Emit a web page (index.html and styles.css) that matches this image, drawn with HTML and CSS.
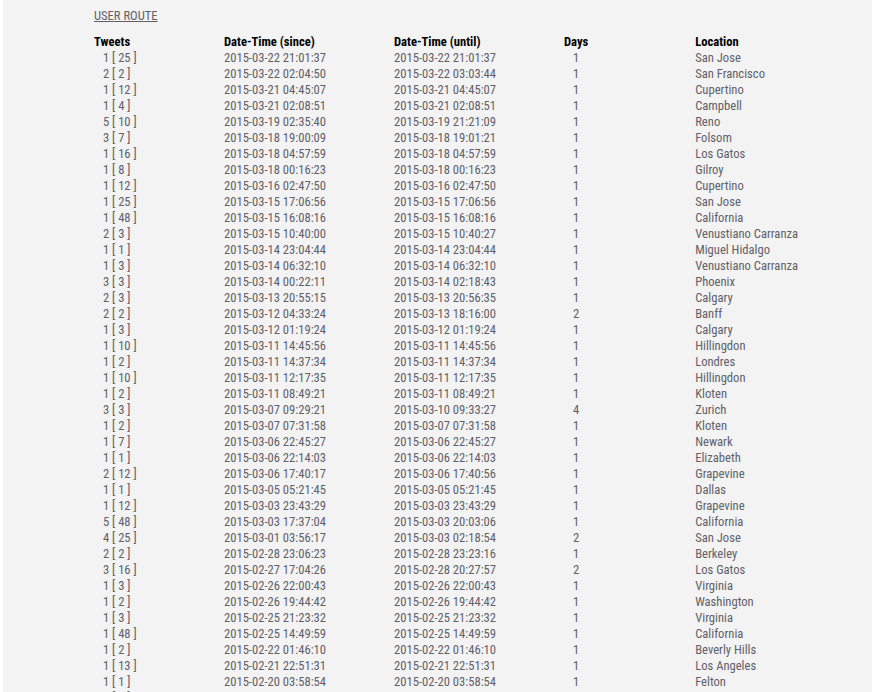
FILE: index.html
```html
<!DOCTYPE html>
<html lang="en">
<head>
<meta charset="utf-8">
<title>User route</title>
<link rel="stylesheet" href="styles.css">
</head>
<body>
<main class="panel">
<h2 class="title">USER ROUTE</h2>
<table class="route">
<thead>
<tr><th class="c-tweets">Tweets</th><th class="c-since">Date-Time (since)</th><th class="c-until">Date-Time (until)</th><th class="c-days">Days</th><th class="c-loc">Location</th></tr>
</thead>
<tbody>
<tr><td class="num">1 [ 25 ]</td><td>2015-03-22 21:01:37</td><td>2015-03-22 21:01:37</td><td class="num">1</td><td>San Jose</td></tr>
<tr><td class="num">2 [ 2 ]</td><td>2015-03-22 02:04:50</td><td>2015-03-22 03:03:44</td><td class="num">1</td><td>San Francisco</td></tr>
<tr><td class="num">1 [ 12 ]</td><td>2015-03-21 04:45:07</td><td>2015-03-21 04:45:07</td><td class="num">1</td><td>Cupertino</td></tr>
<tr><td class="num">1 [ 4 ]</td><td>2015-03-21 02:08:51</td><td>2015-03-21 02:08:51</td><td class="num">1</td><td>Campbell</td></tr>
<tr><td class="num">5 [ 10 ]</td><td>2015-03-19 02:35:40</td><td>2015-03-19 21:21:09</td><td class="num">1</td><td>Reno</td></tr>
<tr><td class="num">3 [ 7 ]</td><td>2015-03-18 19:00:09</td><td>2015-03-18 19:01:21</td><td class="num">1</td><td>Folsom</td></tr>
<tr><td class="num">1 [ 16 ]</td><td>2015-03-18 04:57:59</td><td>2015-03-18 04:57:59</td><td class="num">1</td><td>Los Gatos</td></tr>
<tr><td class="num">1 [ 8 ]</td><td>2015-03-18 00:16:23</td><td>2015-03-18 00:16:23</td><td class="num">1</td><td>Gilroy</td></tr>
<tr><td class="num">1 [ 12 ]</td><td>2015-03-16 02:47:50</td><td>2015-03-16 02:47:50</td><td class="num">1</td><td>Cupertino</td></tr>
<tr><td class="num">1 [ 25 ]</td><td>2015-03-15 17:06:56</td><td>2015-03-15 17:06:56</td><td class="num">1</td><td>San Jose</td></tr>
<tr><td class="num">1 [ 48 ]</td><td>2015-03-15 16:08:16</td><td>2015-03-15 16:08:16</td><td class="num">1</td><td>California</td></tr>
<tr><td class="num">2 [ 3 ]</td><td>2015-03-15 10:40:00</td><td>2015-03-15 10:40:27</td><td class="num">1</td><td>Venustiano Carranza</td></tr>
<tr><td class="num">1 [ 1 ]</td><td>2015-03-14 23:04:44</td><td>2015-03-14 23:04:44</td><td class="num">1</td><td>Miguel Hidalgo</td></tr>
<tr><td class="num">1 [ 3 ]</td><td>2015-03-14 06:32:10</td><td>2015-03-14 06:32:10</td><td class="num">1</td><td>Venustiano Carranza</td></tr>
<tr><td class="num">3 [ 3 ]</td><td>2015-03-14 00:22:11</td><td>2015-03-14 02:18:43</td><td class="num">1</td><td>Phoenix</td></tr>
<tr><td class="num">2 [ 3 ]</td><td>2015-03-13 20:55:15</td><td>2015-03-13 20:56:35</td><td class="num">1</td><td>Calgary</td></tr>
<tr><td class="num">2 [ 2 ]</td><td>2015-03-12 04:33:24</td><td>2015-03-13 18:16:00</td><td class="num">2</td><td>Banff</td></tr>
<tr><td class="num">1 [ 3 ]</td><td>2015-03-12 01:19:24</td><td>2015-03-12 01:19:24</td><td class="num">1</td><td>Calgary</td></tr>
<tr><td class="num">1 [ 10 ]</td><td>2015-03-11 14:45:56</td><td>2015-03-11 14:45:56</td><td class="num">1</td><td>Hillingdon</td></tr>
<tr><td class="num">1 [ 2 ]</td><td>2015-03-11 14:37:34</td><td>2015-03-11 14:37:34</td><td class="num">1</td><td>Londres</td></tr>
<tr><td class="num">1 [ 10 ]</td><td>2015-03-11 12:17:35</td><td>2015-03-11 12:17:35</td><td class="num">1</td><td>Hillingdon</td></tr>
<tr><td class="num">1 [ 2 ]</td><td>2015-03-11 08:49:21</td><td>2015-03-11 08:49:21</td><td class="num">1</td><td>Kloten</td></tr>
<tr><td class="num">3 [ 3 ]</td><td>2015-03-07 09:29:21</td><td>2015-03-10 09:33:27</td><td class="num">4</td><td>Zurich</td></tr>
<tr><td class="num">1 [ 2 ]</td><td>2015-03-07 07:31:58</td><td>2015-03-07 07:31:58</td><td class="num">1</td><td>Kloten</td></tr>
<tr><td class="num">1 [ 7 ]</td><td>2015-03-06 22:45:27</td><td>2015-03-06 22:45:27</td><td class="num">1</td><td>Newark</td></tr>
<tr><td class="num">1 [ 1 ]</td><td>2015-03-06 22:14:03</td><td>2015-03-06 22:14:03</td><td class="num">1</td><td>Elizabeth</td></tr>
<tr><td class="num">2 [ 12 ]</td><td>2015-03-06 17:40:17</td><td>2015-03-06 17:40:56</td><td class="num">1</td><td>Grapevine</td></tr>
<tr><td class="num">1 [ 1 ]</td><td>2015-03-05 05:21:45</td><td>2015-03-05 05:21:45</td><td class="num">1</td><td>Dallas</td></tr>
<tr><td class="num">1 [ 12 ]</td><td>2015-03-03 23:43:29</td><td>2015-03-03 23:43:29</td><td class="num">1</td><td>Grapevine</td></tr>
<tr><td class="num">5 [ 48 ]</td><td>2015-03-03 17:37:04</td><td>2015-03-03 20:03:06</td><td class="num">1</td><td>California</td></tr>
<tr><td class="num">4 [ 25 ]</td><td>2015-03-01 03:56:17</td><td>2015-03-03 02:18:54</td><td class="num">2</td><td>San Jose</td></tr>
<tr><td class="num">2 [ 2 ]</td><td>2015-02-28 23:06:23</td><td>2015-02-28 23:23:16</td><td class="num">1</td><td>Berkeley</td></tr>
<tr><td class="num">3 [ 16 ]</td><td>2015-02-27 17:04:26</td><td>2015-02-28 20:27:57</td><td class="num">2</td><td>Los Gatos</td></tr>
<tr><td class="num">1 [ 3 ]</td><td>2015-02-26 22:00:43</td><td>2015-02-26 22:00:43</td><td class="num">1</td><td>Virginia</td></tr>
<tr><td class="num">1 [ 2 ]</td><td>2015-02-26 19:44:42</td><td>2015-02-26 19:44:42</td><td class="num">1</td><td>Washington</td></tr>
<tr><td class="num">1 [ 3 ]</td><td>2015-02-25 21:23:32</td><td>2015-02-25 21:23:32</td><td class="num">1</td><td>Virginia</td></tr>
<tr><td class="num">1 [ 48 ]</td><td>2015-02-25 14:49:59</td><td>2015-02-25 14:49:59</td><td class="num">1</td><td>California</td></tr>
<tr><td class="num">1 [ 2 ]</td><td>2015-02-22 01:46:10</td><td>2015-02-22 01:46:10</td><td class="num">1</td><td>Beverly Hills</td></tr>
<tr><td class="num">1 [ 13 ]</td><td>2015-02-21 22:51:31</td><td>2015-02-21 22:51:31</td><td class="num">1</td><td>Los Angeles</td></tr>
<tr><td class="num">1 [ 1 ]</td><td>2015-02-20 03:58:54</td><td>2015-02-20 03:58:54</td><td class="num">1</td><td>Felton</td></tr>
<tr><td class="num">1 [ 1 ]</td><td></td><td></td><td></td><td></td></tr>
</tbody>
</table>
</main>
</body>
</html>
```
FILE: styles.css
```css
html, body { margin: 0; background: #fff; overflow: hidden; height: 692px; }
body { padding: 0 4px 0 3px; font-family: "Roboto Condensed", Roboto, "Liberation Sans", sans-serif; font-stretch: condensed; font-size: 12.6px; color: #606068; }
.panel { background: #f3f3f3; height: 692px; padding: 8px 0 0 91px; box-sizing: border-box; overflow: hidden; }
.title { margin: 0 0 10px; font-size: 12.6px; line-height: 16px; font-weight: 400; color: #606068; text-decoration: underline; }
.route { border-collapse: collapse; table-layout: fixed; width: 738.2px; }
.route th, .route td { padding: 0; height: 16px; line-height: 16px; text-align: left; white-space: nowrap; }
.route th { color: #000; font-weight: 700; }
.c-tweets { width: 130px; }
.c-since { width: 170px; }
.c-until { width: 170px; }
.c-days { width: 131.2px; }
.route td.num { padding-left: 9px; }
```
